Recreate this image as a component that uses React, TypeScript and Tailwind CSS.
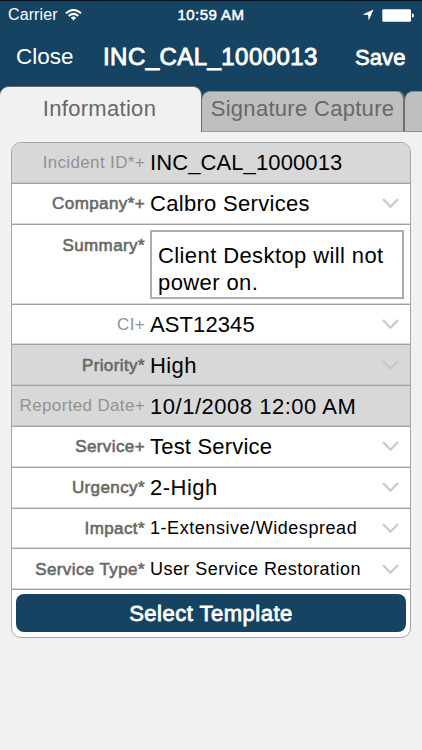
type Field = {
  label: string;
  value: string;
  labelClass: string;
  valueClass: string;
  readOnly?: boolean;
  menu?: boolean;
  tall?: boolean;
};

const light = "text-[17px] tracking-[0.35px] text-[#929292]";
const strong = "text-[17px] tracking-[0.4px] text-[#686868] [-webkit-text-stroke:0.6px_#686868]";

const fields: Field[] = [
  { label: "Incident ID*+", value: "INC_CAL_1000013", labelClass: light, valueClass: "text-[22px] tracking-[0.1px]", readOnly: true },
  { label: "Company*+", value: "Calbro Services", labelClass: strong, valueClass: "text-[22px] tracking-[0.3px]", menu: true },
  { label: "Summary*", value: "Client Desktop will not power on.", labelClass: strong, valueClass: "text-[22px] tracking-[0.4px]", tall: true },
  { label: "CI+", value: "AST12345", labelClass: light, valueClass: "text-[22px] tracking-[0.1px]", menu: true },
  { label: "Priority*", value: "High", labelClass: strong, valueClass: "text-[22px] tracking-[0.4px]", readOnly: true, menu: true },
  { label: "Reported Date+", value: "10/1/2008 12:00 AM", labelClass: light, valueClass: "text-[22px] tracking-[0.52px]", readOnly: true },
  { label: "Service+", value: "Test Service", labelClass: strong, valueClass: "text-[22px] tracking-[0.2px]", menu: true },
  { label: "Urgency*", value: "2-High", labelClass: strong, valueClass: "text-[22px] tracking-[0.5px]", menu: true },
  { label: "Impact*", value: "1-Extensive/Widespread", labelClass: strong, valueClass: "text-[18px] tracking-[0.55px]", menu: true },
  { label: "Service Type*", value: "User Service Restoration", labelClass: strong, valueClass: "text-[18px] tracking-[0.45px]", menu: true },
];

function Chevron({ faded }: { faded?: boolean }) {
  return (
    <svg className="mr-[11px] h-[11px] w-[17px] shrink-0" viewBox="0 0 17 11" fill="none">
      <path d="M1 1L8.5 8.7L16 1" stroke={faded ? "#c6c6c6" : "#c9c9c9"} strokeWidth="2.3" />
    </svg>
  );
}

function FieldRow({ field }: { field: Field }) {
  if (field.tall) {
    return (
      <div className="flex h-[80px] border-b border-[#a3a3a3] shadow-[inset_0_-1px_0_#dadada]">
        <div className={"w-[133px] pt-[9px] text-right leading-[24px] whitespace-nowrap " + field.labelClass}>{field.label}</div>
        <div className={"mt-[5px] ml-[5px] h-[69px] w-[254px] border-2 border-[#adadad] pt-[10px] pl-[6px] leading-[27px] text-black " + field.valueClass}>
          {field.value}
        </div>
      </div>
    );
  }
  return (
    <div
      className={
        "flex h-[40.8px] items-center border-b border-[#a3a3a3] " +
        (field.readOnly ? "bg-[#d8d8d8] shadow-[inset_0_-1px_0_#c4c4c4]" : "bg-white shadow-[inset_0_-1px_0_#dadada]")
      }
    >
      <div className={"w-[133px] text-right whitespace-nowrap " + field.labelClass}>{field.label}</div>
      <div className={"ml-[5px] flex-1 whitespace-nowrap text-black " + field.valueClass}>{field.value}</div>
      {field.menu && <Chevron faded={field.readOnly} />}
    </div>
  );
}

export default function App() {
  return (
    <div className="h-[750px] w-[422px] overflow-hidden bg-[#f1f1f1] font-['Liberation_Sans',Arial,sans-serif]">
      <header className="h-[86px] border-t border-[#080f1c] bg-[#174363] text-white">
        <div className="flex h-[28px] items-center pr-[8px] pl-[8px]">
          <div className="flex flex-1 items-center gap-[7px]">
            <span className="text-[16px] tracking-[0.1px]">Carrier</span>
            <svg className="h-[12px] w-[17px]" viewBox="0 0 17 12" fill="none" stroke="white" strokeWidth="2">
              <path d="M1 4.3Q8.5 -2.5 16 4.3" />
              <path d="M3.7 7Q8.5 2.8 13.3 7" />
              <path d="M5.8 8.7Q8.5 6.5 11.2 8.7L8.5 11.6Z" fill="white" stroke="none" />
            </svg>
          </div>
          <span className="text-[15px] tracking-[0.45px] [-webkit-text-stroke:0.5px_white]">10:59 AM</span>
          <div className="flex flex-1 items-center justify-end gap-[8px]">
            <svg className="h-[12px] w-[12px]" viewBox="0 0 12 12" fill="white">
              <path d="M11.5 0.5L6.7 11.5L6 6L0.5 5.4Z" />
            </svg>
            <svg className="h-[13px] w-[32px]" viewBox="0 0 32 13" fill="white">
              <rect x="0.3" y="0.3" width="28.7" height="12.4" rx="1.2" />
              <path d="M30 4.3Q32 4.7 32 6.5T30 8.7Z" />
            </svg>
          </div>
        </div>
        <div className="flex h-[56px] items-center pl-[16px]">
          <span className="w-[87px] text-[22.5px]">Close</span>
          <span className="w-[252px] text-[24px] tracking-[0.45px] [-webkit-text-stroke:0.9px_white]">INC_CAL_1000013</span>
          <span className="text-[22px] tracking-[0.1px] [-webkit-text-stroke:0.8px_white]">Save</span>
        </div>
      </header>
      <nav className="flex h-[46px] items-end bg-[#174363] text-[22px] tracking-[0.3px] text-[#686868]">
        <div className="flex h-[46px] w-[202px] shrink-0 items-center justify-center rounded-t-[9px] border-t border-r border-[#6d6d6d] bg-[#f1f1f1] pr-[2px] pb-[2px]">
          <span>Information</span>
        </div>
        <div className="flex h-[41px] w-[203px] shrink-0 items-center justify-center rounded-t-[8px] border-t border-r-2 border-b border-t-[#8d8d8d] border-r-[#6d6d6d] border-b-[#989898] bg-[#bfbfbf] pb-[7px] whitespace-nowrap">
          <span>Signature Capture</span>
        </div>
        <div className="h-[41px] w-[30px] shrink-0 rounded-tl-[8px] border-t border-b border-[#8d8d8d] bg-[#bfbfbf]" />
      </nav>
      <main className="pt-[10px] pl-[11px]">
        <section className="h-[496px] w-[400px] overflow-hidden rounded-[10px] border border-[#a5a5a5] bg-white">
          {fields.map((field) => (
            <FieldRow key={field.label} field={field} />
          ))}
          <button className="mt-[4px] ml-[4px] flex h-[38px] w-[390px] items-center justify-center rounded-[8px] bg-[#174363] text-[22px] tracking-[0.5px] text-white [-webkit-text-stroke:0.8px_white]">
            Select Template
          </button>
        </section>
      </main>
    </div>
  );
}
